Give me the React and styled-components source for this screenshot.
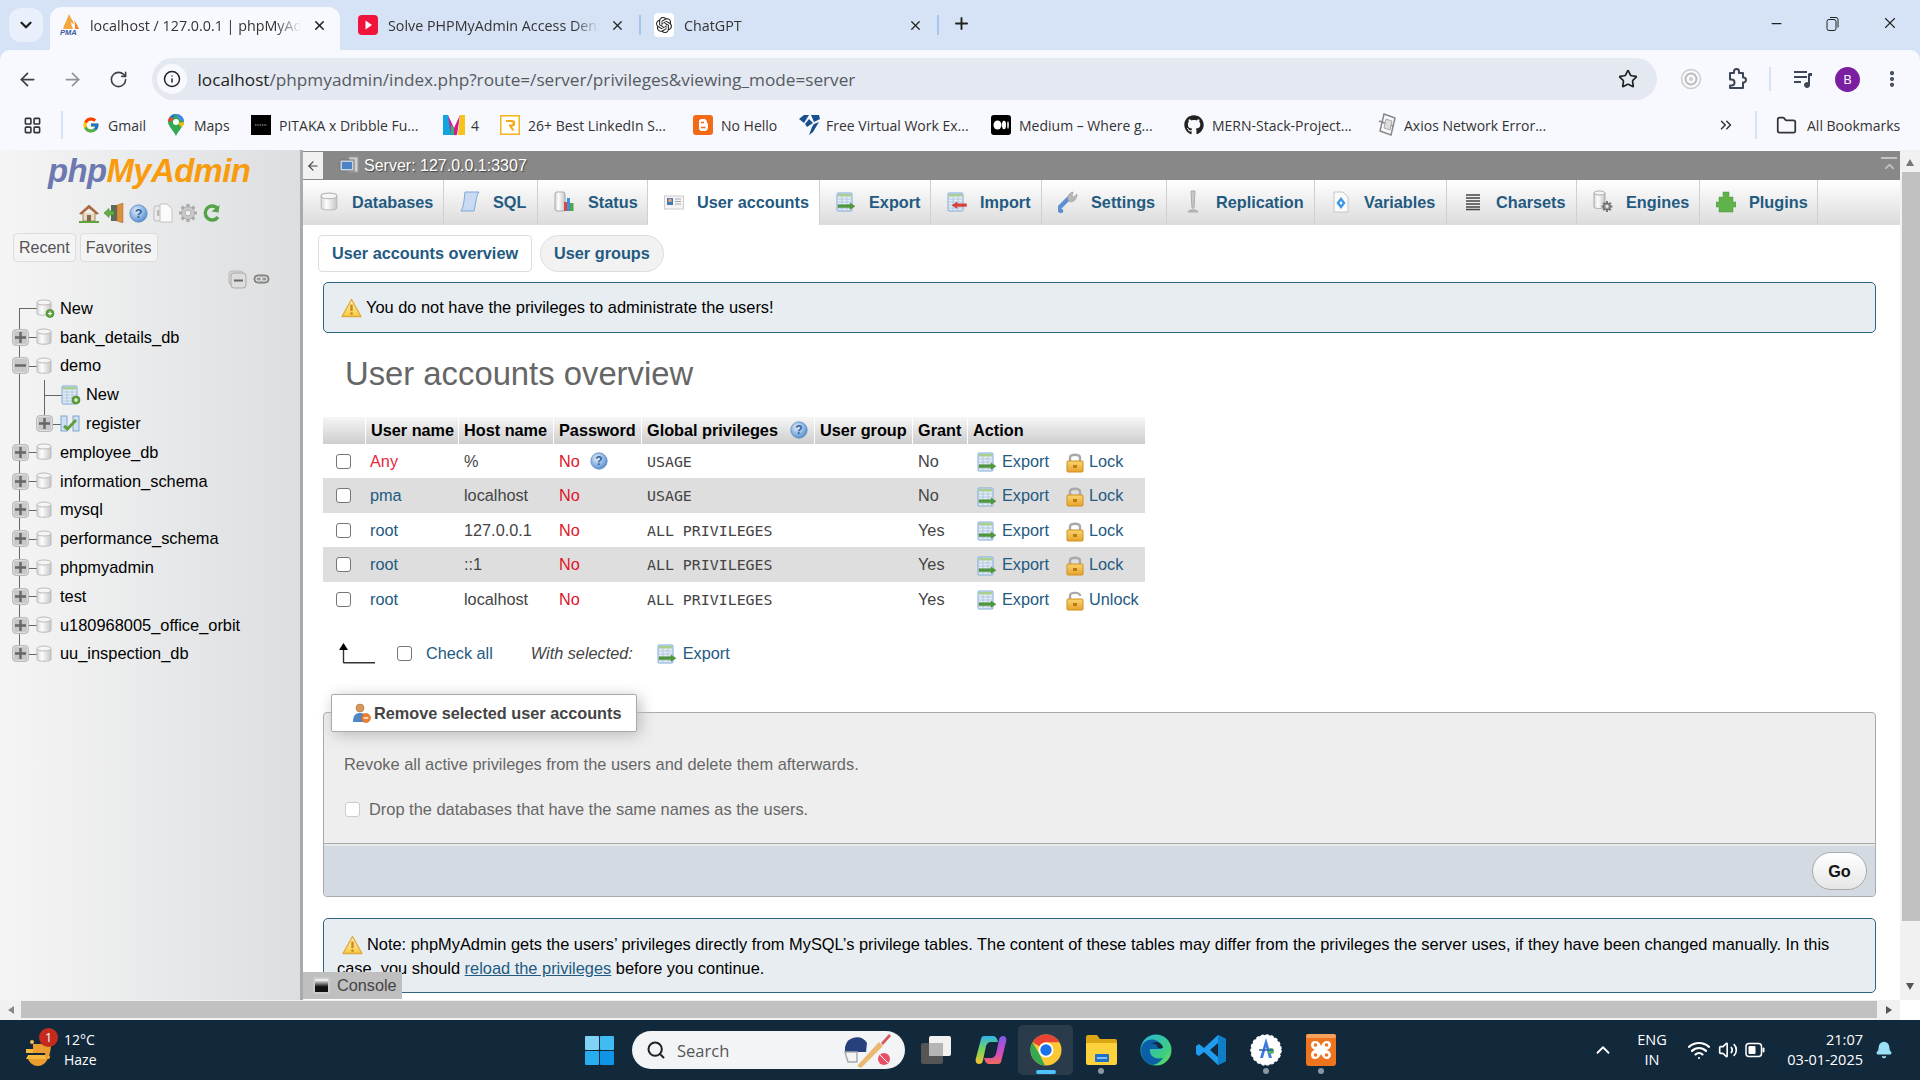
import styled, { createGlobalStyle } from 'styled-components'
import { ArrowLeft, ArrowRight, RotateCw, Star, Info, X, Plus, Minus, MoreVertical, ChevronDown, Folder, ChevronsRight, LayoutGrid, Search, ChevronUp, Wifi, Volume2, Bell } from 'lucide-react'
import { FaGithub } from 'react-icons/fa'
import { FcGoogle } from 'react-icons/fc'
import { SiOpenai } from 'react-icons/si'

const Global = createGlobalStyle`
    html, body { margin: 0; padding: 0; background: #fff; }
    * { box-sizing: border-box; }
    body { font-family: "Liberation Sans", Arial, sans-serif; font-size: 16.25px; color: #444; }
`

const Page = styled.div`
    width: 1920px;
    height: 1080px;
    overflow: hidden;
    display: flex;
    flex-direction: column;
    background: #d6e3f6;
`

/* browser chrome */
const TabStrip = styled.div`
    height: 50px;
    flex: none;
    display: flex;
    align-items: flex-end;
    padding-left: 9px;
    font-family: "Open Sans", sans-serif;
    font-size: 14.3px;
    color: #333;
`
const TabSearch = styled.div`
    width: 34px;
    height: 34px;
    margin-bottom: 8px;
    border-radius: 12px;
    background: #e9f0fb;
    display: flex;
    align-items: center;
    justify-content: center;
    color: #1f1f1f;
`
const BrowserTab = styled.div`
    position: relative;
    width: ${p => p.$w}px;
    height: 43px;
    margin-left: ${p => p.$ml || 0}px;
    padding: 0 0 7px ${p => p.$pl}px;
    display: flex;
    align-items: center;
    gap: 10px;
    background: ${p => p.$active ? '#f8f9fe' : 'transparent'};
    border-radius: 12px 12px 0 0;
    ${p => p.$sep && `
        &::after {
            content: '';
            position: absolute;
            right: 0;
            top: 8px;
            width: 2px;
            height: 20px;
            background: #a9c4ec;
        }
    `}
`
const TabTitle = styled.div`
    flex: 1;
    min-width: 0;
    white-space: nowrap;
    overflow: hidden;
    -webkit-mask-image: linear-gradient(90deg, #000 88%, transparent);
    mask-image: linear-gradient(90deg, #000 88%, transparent);
`
const TabClose = styled.div`
    width: 16px;
    margin-right: ${p => p.$mr}px;
    display: flex;
    align-items: center;
    justify-content: center;
    color: #222;
`
const NewTab = styled.div`
    margin: 0 0 17px 13px;
    color: #222;
    display: flex;
`
const WindowControls = styled.div`
    margin: 0 0 18px auto;
    display: flex;
    align-items: center;
    gap: 41px;
    padding-right: 21px;
    color: #222;
`
const Toolbar = styled.div`
    height: 50px;
    flex: none;
    background: #f8f9fe;
    border-radius: 10px 10px 0 0;
    display: flex;
    align-items: center;
    padding: 8px 0 0 15px;
    color: #444;
`
const NavButton = styled.div`
    width: 24px;
    margin-right: 21.5px;
    display: flex;
    justify-content: center;
    color: ${p => p.$dim ? '#8f949c' : '#3c4043'};
`
const Omnibox = styled.div`
    width: 1505px;
    height: 42px;
    border-radius: 21px;
    background: #e4e8f1;
    display: flex;
    align-items: center;
    padding: 0 19px 0 5px;
`
const InfoBubble = styled.div`
    width: 30px;
    height: 30px;
    border-radius: 50%;
    background: #f8f9fe;
    display: flex;
    align-items: center;
    justify-content: center;
    color: #222;
    margin-right: 11px;
`
const Url = styled.div`
    flex: 1;
    font-family: "Open Sans", sans-serif;
    font-size: 17.2px;
    color: #555b62;
    white-space: nowrap;
    b { font-weight: 400; color: #1f1f1f; }
`
const ToolSlot = styled.div`
    width: ${p => p.$w}px;
    display: flex;
    justify-content: center;
    color: #3c4654;
`
const ToolSep = styled.div`
    width: 2px;
    height: 24px;
    margin: 0 15.5px 0 20px;
    background: #d5e3f7;
`
const Avatar = styled.div`
    width: 25px;
    height: 25px;
    border-radius: 50%;
    background: #7b1fa2;
    color: #fff;
    font-family: "Open Sans", sans-serif;
    font-size: 13px;
    display: flex;
    align-items: center;
    justify-content: center;
`
const BookmarkBar = styled.div`
    height: 50px;
    flex: none;
    background: #f8f9fe;
    display: flex;
    align-items: center;
    padding: 0 0 0 23px;
    font-family: "Open Sans", sans-serif;
    font-size: 14px;
    color: #333;
`
const Bookmark = styled.div`
    width: ${p => p.$w}px;
    display: flex;
    align-items: center;
    gap: ${p => p.$gap || 8}px;
    white-space: nowrap;
`
const BarSep = styled.div`
    width: 2px;
    height: 28px;
    margin: 0 ${p => p.$mr}px 0 ${p => p.$ml}px;
    background: #d5e3f7;
`

/* phpMyAdmin page */
const Body = styled.div`
    flex: 1;
    display: flex;
    min-height: 0;
    background: #fff;
`
const Sidebar = styled.div`
    width: 303px;
    flex: none;
    border-right: 3px solid #aaa;
    background: linear-gradient(90deg, #f5f5f5, #dcdee0);
    display: flex;
    flex-direction: column;
    color: #000;
`
const Logo = styled.div`
    height: 44px;
    padding-left: 48px;
    font-size: 32.9px;
    font-weight: 700;
    font-style: italic;
    letter-spacing: -0.6px;
    line-height: 42px;
    color: #f89c0e;
    span { color: #6c78af; }
`
const NavIcons = styled.div`
    height: 30px;
    margin-top: 4px;
    padding-left: 79px;
    display: flex;
    align-items: center;
    gap: 5px;
`
const QuickTabs = styled.div`
    margin: 5px 0 0 13px;
    display: flex;
    gap: 4px;
`
const QuickTab = styled.div`
    height: 29px;
    padding: 0 5px;
    border: 1px solid #ddd;
    border-radius: 4px;
    background: #f4f4f4;
    color: #555;
    font-size: 16px;
    line-height: 27px;
`
const TreeTools = styled.div`
    height: 20px;
    margin-top: 7px;
    padding-left: 228px;
    display: flex;
    align-items: center;
    gap: 6px;
`
const Tree = styled.div`
    margin-top: 5px;
`
const TreeRow = styled.div`
    position: relative;
    height: 28.8px;
    display: flex;
    align-items: center;
    padding-left: ${p => p.$nested ? 86 : 60}px;
    font-size: 16.4px;
    &::before {
        content: '';
        position: absolute;
        left: 19px;
        top: ${p => p.$first ? '50%' : 0};
        bottom: ${p => p.$last ? '50%' : 0};
        width: 1px;
        background: #666;
    }
`
const TreeLink = styled.div`
    position: absolute;
    left: ${p => p.$x}px;
    top: 50%;
    width: ${p => p.$w}px;
    height: 1px;
    background: #666;
`
const SubLine = styled.div`
    position: absolute;
    left: 44px;
    top: 0;
    bottom: ${p => p.$half ? '50%' : 0};
    width: 1px;
    background: #666;
`
const Expander = styled.div`
    position: absolute;
    left: ${p => p.$x}px;
    top: 50%;
    margin-top: -8.5px;
    width: 17px;
    height: 17px;
    border-radius: 4px;
    background: #c8c8c8;
    border: 1px solid #bbb;
    box-shadow: inset 0 0 0 1px #ddd;
    display: flex;
    align-items: center;
    justify-content: center;
    color: #666;
    z-index: 1;
`
const TreeIcon = styled.div`
    position: absolute;
    left: ${p => p.$x}px;
    top: 50%;
    margin-top: -9px;
    height: 18px;
    display: flex;
    align-items: center;
    z-index: 1;
`
const Main = styled.div`
    position: relative;
    flex: 1;
    min-width: 0;
    overflow: hidden;
    display: flex;
    flex-direction: column;
`
const ServerBar = styled.div`
    height: 29px;
    flex: none;
    margin-top: 1px;
    background: #888;
    display: flex;
    align-items: center;
    color: #fff;
    font-size: 16px;
    text-shadow: 1px 1px 1px #444;
`
const BackBox = styled.div`
    width: 20px;
    height: 27px;
    background: #f1f1f1;
    color: #444;
    display: flex;
    align-items: center;
    justify-content: center;
    margin-right: 16px;
`
const ServerLabel = styled.div`
    flex: 1;
    margin-left: 5px;
`
const PinIcon = styled.div`
    width: 16px;
    margin-right: 3px;
    border-top: 2px solid #c4c4c4;
    display: flex;
    justify-content: center;
    color: #c4c4c4;
`
const Tabs = styled.div`
    height: 45px;
    flex: none;
    display: flex;
    background: linear-gradient(#fff, #dcdcdc);
    border-bottom: 1px solid #ddd;
`
const Tab = styled.div`
    width: ${p => p.$w}px;
    padding-left: 16px;
    display: flex;
    align-items: center;
    gap: 13px;
    font-weight: 700;
    color: #235a81;
    border-right: 1px solid #d0d0d0;
    white-space: nowrap;
    background: ${p => p.$active ? '#fff' : 'transparent'};
    height: ${p => p.$active ? '45px' : 'auto'};
    svg { flex: none; }
`
const Content = styled.div`
    flex: none;
    display: flex;
    flex-direction: column;
    margin: 0 24px 0 20px;
    & > * { flex: none; }
`
const SubTabs = styled.div`
    display: flex;
    gap: 8px;
    margin: 10px 0 0 -5px;
`
const SubTab = styled.div`
    height: 37px;
    padding: 0 13px;
    border: 1px solid #ddd;
    border-radius: ${p => p.$pill ? '19px' : '4px'};
    background: ${p => p.$pill ? '#f2f2f2' : '#fff'};
    color: #235a81;
    font-weight: 700;
    line-height: 35px;
`
const Notice = styled.div`
    margin-top: ${p => p.$mt}px;
    height: ${p => p.$h}px;
    border: 1px solid #2c6681;
    border-radius: 5px;
    background: #e8edf1;
    color: #000;
    padding: ${p => p.$pad};
    text-indent: ${p => p.$indent || 0}px;
    line-height: 24px;
    font-size: 16.4px;
    svg { vertical-align: -5px; margin-right: 4px; }
`
const Heading = styled.h2`
    margin: 21px 0 0 22px;
    height: 40px;
    font-size: 32.8px;
    font-weight: 400;
    line-height: 40px;
    color: #666;
`
const Table = styled.table`
    margin-top: 23px;
    width: 822px;
    table-layout: fixed;
    border-collapse: collapse;
    font-size: 16.25px;
    th {
        height: 27px;
        padding: 0 0 0 5.5px;
        text-align: left;
        color: #000;
        font-weight: 700;
        white-space: nowrap;
        background: linear-gradient(#f6f6f6, #cdcdcd);
        border-right: 1px solid #fff;
    }
    th svg { vertical-align: 1px; margin: -4px 0 -4px 12px; }
    th:last-child { border-right: 0; }
    td {
        padding: 0 0 0 6px;
        white-space: nowrap;
    }
    td:nth-child(2) { padding-left: 5px; }
    tbody tr { height: 34px; }
    tbody tr:nth-child(even) { height: 35px; background: #dedede; }
`
const Check = styled.input.attrs({ type: 'checkbox' })`
    appearance: none;
    width: 15px;
    height: 15px;
    margin: 0;
    flex: none;
    display: block;
    border: 1px solid ${p => p.$soft ? '#ccc' : '#767676'};
    border-radius: 3px;
    background: #fff;
`
const CheckCell = styled.div`
    display: flex;
    padding-left: 7px;
`
const Link = styled.a`
    color: #235a81;
    text-decoration: ${p => p.$under ? 'underline' : 'none'};
`
const Red = styled.span`
    color: ${p => p.$soft ? '#e8293c' : '#e0132a'};
    svg { vertical-align: 1px; margin: -4px 0 -4px 10px; }
`
const Mono = styled.span`
    font-family: "DejaVu Sans Mono", monospace;
    font-size: 14.9px;
    color: #444;
`
const ActionCell = styled.div`
    display: flex;
    align-items: center;
    padding-left: 4px;
`
const ActionLink = styled.a`
    width: ${p => p.$w}px;
    display: flex;
    align-items: center;
    gap: ${p => p.$gap}px;
    color: #235a81;
    svg { flex: none; margin-top: 2px; }
`
const SelectRow = styled.div`
    height: 40px;
    margin-top: 17px;
    padding-left: 16px;
    display: flex;
    align-items: center;
`
const Picked = styled.em`
    margin: 0 24px 0 38px;
    color: #444;
`
const CheckAll = styled.label`
    margin-left: 22px;
    display: flex;
    align-items: center;
    gap: 14px;
    color: #235a81;
`
const Fieldset = styled.div`
    margin-top: 39px;
    height: 185px;
    border: 1px solid #aaa;
    border-radius: 4px;
    background: #eee;
    display: flex;
    flex-direction: column;
`
const Legend = styled.div`
    width: 306px;
    height: 38px;
    margin: -19px 0 0 7px;
    border: 1px solid #aaa;
    border-radius: 2px;
    background: #fff;
    box-shadow: 3px 3px 15px #bbb;
    padding-left: 19px;
    display: flex;
    align-items: center;
    gap: 3px;
    font-weight: 700;
    color: #444;
`
const Revoke = styled.div`
    margin: 20px 0 0 20px;
    height: 24px;
    line-height: 24px;
    font-size: 16.4px;
    color: #666;
`
const DropRow = styled.div`
    margin: 21px 0 0 21px;
    height: 24px;
    display: flex;
    align-items: center;
    gap: 9px;
    font-size: 16.4px;
    color: #666;
`
const FieldFooter = styled.div`
    margin-top: auto;
    height: 53px;
    border-top: 1px solid #aaa;
    box-shadow: inset 0 2px 0 #e8e8e8;
    background: #d3dae2;
    display: flex;
    justify-content: flex-end;
    align-items: center;
    padding: 2px 8px 0 0;
    border-radius: 0 0 4px 4px;
`
const GoButton = styled.div`
    width: 55px;
    height: 38px;
    border: 1px solid #aaa;
    border-radius: 19px;
    background: linear-gradient(#fff, #e6e6e6);
    color: #111;
    font-weight: 700;
    text-align: center;
    line-height: 36px;
`
const Console = styled.div`
    position: absolute;
    left: 0;
    bottom: 1px;
    width: 99px;
    height: 27px;
    background: #bfbfbf;
    color: #444;
    display: flex;
    align-items: center;
    gap: 7px;
    padding-left: 10px;
`
const ConsoleGlyph = styled.div`
    width: 17px;
    height: 17px;
    border: 2px solid #ccc;
    border-radius: 2px;
    background: linear-gradient(#eee 10%, #111 60%);
`
const VScroll = styled.div`
    width: 20px;
    flex: none;
    background: #f1f1f1;
    display: flex;
    flex-direction: column;
    align-items: center;
    color: #777;
`
const VThumb = styled.div`
    width: 18px;
    margin: 6px 0 0 2px;
    height: 749px;
    background: #c1c1c1;
`
const ScrollArrow = styled.div`
    width: 0;
    height: 0;
    border-left: 4px solid transparent;
    border-right: 4px solid transparent;
    ${p => p.$up ? 'border-bottom: 7px solid #777;' : 'border-top: 7px solid #555;'}
    margin-top: ${p => p.$mt}px;
`
const HScroll = styled.div`
    height: 20px;
    flex: none;
    background: #fff;
    display: flex;
    align-items: center;
    padding-right: 20px;
`
const HTrack = styled.div`
    flex: 1;
    height: 20px;
    padding: 1px 0 2px 21px;
    background: #f1f1f1;
    display: flex;
    align-items: center;
    position: relative;
`
const HThumb = styled.div`
    width: 1856px;
    height: 100%;
    background: #c1c1c1;
`
const HArrow = styled.div`
    position: absolute;
    top: 6px;
    ${p => p.$left ? 'left: 8px;' : 'right: 8px;'}
    width: 0;
    height: 0;
    border-top: 4px solid transparent;
    border-bottom: 4px solid transparent;
    ${p => p.$left ? 'border-right: 6px solid #888;' : 'border-left: 6px solid #555;'}
`

/* windows taskbar */
const Taskbar = styled.div`
    height: 60px;
    flex: none;
    background: #12283b;
    display: flex;
    align-items: center;
    color: #fff;
    font-family: "Open Sans", sans-serif;
`
const Weather = styled.div`
    width: 585px;
    padding-left: 25px;
    display: flex;
    align-items: center;
    gap: 9px;
    font-size: 14px;
    line-height: 20px;
`
const WeatherGlyph = styled.div`
    position: relative;
    width: 30px;
    height: 36px;
`
const Badge = styled.div`
    position: absolute;
    left: 14px;
    top: -4px;
    width: 19px;
    height: 19px;
    border-radius: 50%;
    background: #c42b1c;
    color: #fff;
    font-size: 12.5px;
    line-height: 19px;
    text-align: center;
`
const SearchPill = styled.div`
    width: 273px;
    height: 38px;
    margin-left: 18px;
    border-radius: 19px;
    background: #f3f4f6;
    display: flex;
    align-items: center;
    padding: 0 12px 0 14px;
    gap: 11px;
    font-size: 16.5px;
    color: #555;
    span { flex: 1; }
`
const TaskSlot = styled.div`
    position: relative;
    width: 55px;
    height: 50px;
    margin-left: ${p => p.$ml || 0}px;
    display: flex;
    align-items: center;
    justify-content: center;
    border-radius: 5px;
    background: ${p => p.$active ? '#2a3c4c' : 'transparent'};
    ${p => p.$dot && `
        &::after {
            content: '';
            position: absolute;
            bottom: 1px;
            left: 50%;
            margin-left: ${p.$active ? -10 : -3}px;
            width: ${p.$active ? 20 : 6}px;
            height: ${p.$active ? 4 : 6}px;
            border-radius: 3px;
            background: ${p.$active ? '#4cc2ff' : '#8a97a3'};
        }
    `}
`
const Tray = styled.div`
    margin-left: auto;
    padding-right: 27px;
    display: flex;
    align-items: center;
    font-size: 14.5px;
`
const LangBlock = styled.div`
    width: 30px;
    margin: 0 20px 0 23px;
    line-height: 20px;
    text-align: center;
`
const TrayIcons = styled.div`
    display: flex;
    align-items: center;
    gap: 7px;
`
const Clock = styled.div`
    width: 77px;
    margin: 0 12px 0 21px;
    line-height: 20px;
    text-align: right;
    white-space: nowrap;
`

/* drawings */
const SharedDefs = () => (
    <svg width="0" height="0" style={{ position: 'absolute' }}>
        <defs>
            <linearGradient id="cyl" x1="0" x2="1" y1="0" y2="0">
                <stop offset="0" stopColor="#d6d6d6" />
                <stop offset=".35" stopColor="#fdfdfd" />
                <stop offset="1" stopColor="#c6c6c6" />
            </linearGradient>
            <linearGradient id="gold" x1="0" x2="0" y1="0" y2="1">
                <stop offset="0" stopColor="#f9d56e" />
                <stop offset="1" stopColor="#e7a32c" />
            </linearGradient>
            <radialGradient id="help" cx=".4" cy=".35" r=".7">
                <stop offset="0" stopColor="#e4eefa" />
                <stop offset=".6" stopColor="#8ab2e0" />
                <stop offset="1" stopColor="#4f86c6" />
            </radialGradient>
            <linearGradient id="warn" x1="0" x2="0" y1="0" y2="1">
                <stop offset="0" stopColor="#fff6c4" />
                <stop offset="1" stopColor="#f7c93e" />
            </linearGradient>
        </defs>
    </svg>
)
const DbIcon = ({ w = 16, h = 18 }) => (
    <svg width={w} height={h} viewBox="0 0 16 18">
        <path d="M1 3.5V14.5C1 16.8 15 16.8 15 14.5V3.5Z" fill="url(#cyl)" stroke="#bbb" />
        <ellipse cx="8" cy="3.5" rx="7" ry="2.5" fill="#f5f5f5" stroke="#bbb" />
    </svg>
)
const PlusDot = ({ x, y }) => (
    <>
        <circle cx={x} cy={y} r="4" fill="#5ea33a" stroke="#3d7a22" strokeWidth=".6" />
        <path d={`M${x - 2} ${y}h4M${x} ${y - 2}v4`} stroke="#fff" strokeWidth="1.2" />
    </>
)
const NewDbIcon = () => (
    <svg width="19" height="19" viewBox="0 0 19 19">
        <path d="M1 3.5V14.5C1 16.8 15 16.8 15 14.5V3.5Z" fill="url(#cyl)" stroke="#bbb" />
        <ellipse cx="8" cy="3.5" rx="7" ry="2.5" fill="#f5f5f5" stroke="#bbb" />
        <PlusDot x={14} y={14.5} />
    </svg>
)
const GridSheet = ({ arrow }) => (
    <>
        <rect x="1" y="1" width="15" height="18" rx="1" fill="#e3edf8" stroke="#7fa6d6" />
        <rect x="2" y="2" width="13" height="2.500" fill="#a8d08c" />
        <path d="M2 7h13M2 10h13M2 13h13M2 16h13M6 4.500v13.500M11 4.500v13.500" stroke="#b4c8de" />
        {arrow}
    </>
)
const ExportIcon = () => (
    <svg width="20" height="20" viewBox="0 0 20 20">
        <GridSheet arrow={<path d="M2 12.800h12V11l5 3.200-5 3.200v-1.800H2Z" fill="#4e9a3b" stroke="#3c7f2b" strokeWidth=".4" />} />
    </svg>
)
const ImportIcon = () => (
    <svg width="20" height="20" viewBox="0 0 20 20">
        <GridSheet arrow={<path d="M19.500 11.800H10V10l-5 3.200 5 3.200v-1.800h9.500Z" fill="#e0403a" stroke="#b92a25" strokeWidth=".4" />} />
    </svg>
)
const NewTableIcon = () => (
    <svg width="20" height="20" viewBox="0 0 20 20">
        <GridSheet />
        <PlusDot x={15} y={15} />
    </svg>
)
const TableIcon = () => (
    <svg width="20" height="19" viewBox="0 0 20 19">
        <rect x="1" y="2" width="6" height="15" fill="#cfe0f5" stroke="#7fa6d6" />
        <rect x="13" y="2" width="6" height="15" fill="#cfe0f5" stroke="#7fa6d6" />
        <path d="M4 12l3.5 3L16 6" fill="none" stroke="#5f9d3d" strokeWidth="3" />
    </svg>
)
const LockIcon = ({ open }) => (
    <svg width="18" height="21" viewBox="0 0 18 21">
        <path d={open ? 'M4 10V5.5C4 2 14 2 14 5.5V6' : 'M4 10V5.5C4 1.8 14 1.8 14 5.5V10'} fill="none" stroke="#a9a9a9" strokeWidth="2.4" />
        <rect x="1" y="9" width="16" height="11" rx="1" fill="url(#gold)" stroke="#d08f1e" />
        <rect x="7" y="13" width="4" height="3" fill="#b97d14" />
    </svg>
)
const HelpIcon = ({ s = 18 }) => (
    <svg width={s} height={s} viewBox="0 0 18 18">
        <circle cx="9" cy="9" r="8.2" fill="url(#help)" stroke="#5f8fc8" strokeWidth=".8" />
        <text x="9" y="13.2" textAnchor="middle" fontSize="12" fontWeight="700" fontFamily="Liberation Sans" fill="#2d5f9e">?</text>
    </svg>
)
const WarnIcon = () => (
    <svg width="21" height="20" viewBox="0 0 21 20">
        <path d="M10.5 1.5L20 18.5H1Z" fill="url(#warn)" stroke="#e0a93c" strokeWidth="1.3" strokeLinejoin="round" />
        <path d="M10.5 6.5v6.5" stroke="#c98a1e" strokeWidth="2.4" />
        <circle cx="10.5" cy="15.6" r="1.3" fill="#c98a1e" />
    </svg>
)
const HomeIcon = () => (
    <svg width="20" height="20" viewBox="0 0 20 20">
        <path d="M4 10v8h12v-8" fill="#ead9c0" stroke="#a98a5e" />
        <path d="M0.5 10.5L10 2l9.5 8.5-2 .7L10 5 2.5 11.2Z" fill="#b2693a" stroke="#874a22" strokeWidth=".5" />
        <rect x="8" y="12" width="4" height="6" fill="#7c6a54" />
        <path d="M0 19h20" stroke="#5fa33c" strokeWidth="2" />
    </svg>
)
const DoorIcon = () => (
    <svg width="20" height="20" viewBox="0 0 20 20">
        <rect x="7" y="2" width="6" height="16" fill="#5c6a5a" />
        <path d="M13 2l6-2v20l-6-2Z" fill="#d9913f" stroke="#a96a22" strokeWidth=".5" />
        <path d="M0 10l5-4.5V8h5v4H5v2.5Z" fill="#63ae47" stroke="#3e8426" strokeWidth=".6" />
    </svg>
)
const DocsIcon = () => (
    <svg width="20" height="20" viewBox="0 0 20 20">
        <rect x="1" y="3" width="11" height="15" rx="2" fill="#eaeaea" stroke="#bbb" />
        <path d="M7 1h7l5 5v13H7Z" fill="#fbfbfb" stroke="#c4c4c4" />
        <rect x="4" y="7" width="2.5" height="6" fill="#bbb" />
    </svg>
)
const GearIcon = () => (
    <svg width="20" height="20" viewBox="0 0 20 20">
        <path d="M10 1v18M1 10h18M3.6 3.6l12.8 12.8M16.4 3.6L3.6 16.4" stroke="#aaa" strokeWidth="3.2" />
        <circle cx="10" cy="10" r="6.5" fill="#c9c9c9" stroke="#999" strokeWidth=".6" />
        <circle cx="10" cy="10" r="2.8" fill="#f2f2f2" stroke="#999" strokeWidth=".6" />
    </svg>
)
const ReloadIcon = () => (
    <svg width="17" height="20" viewBox="0 0 17 20">
        <path d="M15 6A7 7 0 1 0 15 14" fill="none" stroke="#55a348" strokeWidth="3.4" />
        <path d="M16 1.5V9H9Z" fill="#55a348" transform="rotate(8 12 6)" />
    </svg>
)
const CollapseIcon = () => (
    <svg width="19" height="19" viewBox="0 0 19 19">
        <rect x="1" y="1" width="14" height="14" rx="3" fill="#d5d5d5" stroke="#bbb" />
        <rect x="3" y="3" width="15" height="15" rx="3" fill="#ddd" stroke="#aaa" />
        <path d="M6 10.5h9" stroke="#666" strokeWidth="2" />
    </svg>
)
const ChainIcon = () => (
    <svg width="17" height="10" viewBox="0 0 17 10">
        <rect x="1" y="1" width="15" height="8" rx="4" fill="#999" stroke="#777" />
        <rect x="3" y="3" width="6" height="4" rx="2" fill="none" stroke="#eee" />
        <rect x="8" y="3" width="6" height="4" rx="2" fill="none" stroke="#eee" />
    </svg>
)
const ServerIcon = () => (
    <svg width="20" height="20" viewBox="0 0 20 20">
        <rect x="10" y="1" width="9" height="15" fill="#cfcfcf" stroke="#999" />
        <rect x="1" y="4" width="14" height="11" fill="#c9d3e0" stroke="#777" />
        <rect x="3" y="6" width="10" height="7" fill="#4b83c4" />
        <path d="M5 18h8M9 15v3" stroke="#888" strokeWidth="2" />
    </svg>
)
const SqlIcon = () => (
    <svg width="20" height="22" viewBox="0 0 20 22">
        <path d="M5 1h14c-2 3-2 4-3 9l-2 10H1c2-3 2-5 3-10Z" fill="#c8dbf2" stroke="#7fa6d6" />
    </svg>
)
const StatusIcon = () => (
    <svg width="21" height="22" viewBox="0 0 21 22">
        <rect x="1" y="1" width="10" height="19" rx="2" fill="url(#cyl)" stroke="#aaa" />
        <rect x="10" y="11" width="3" height="9" fill="#d94a3d" />
        <rect x="13" y="7" width="3" height="13" fill="#3f8fd9" />
        <rect x="16" y="12" width="3.5" height="8" fill="#55a348" />
    </svg>
)
const UsersIcon = () => (
    <svg width="20" height="16" viewBox="0 0 20 16">
        <rect x=".5" y="1" width="19" height="13" fill="#f4f4f4" stroke="#ccc" />
        <rect x="3" y="3" width="6" height="7" fill="#3f79b8" />
        <circle cx="6" cy="5.4" r="1.8" fill="#e2a56f" />
        <path d="M11 4h6M11 6.5h6M11 9h6" stroke="#aaa" />
    </svg>
)
const WrenchIcon = () => (
    <svg width="20" height="22" viewBox="0 0 20 22">
        <path d="M3 20c-2-1-2-3-1-4l8-8" fill="none" stroke="#5f8fd0" strokeWidth="4.5" strokeLinecap="round" />
        <path d="M10 9c-1-4 1-7 5-8l-1 4 2 1 3-3c0 5-3 8-7 8Z" fill="#b8b8b8" stroke="#888" strokeWidth=".5" />
    </svg>
)
const ReplicationIcon = () => (
    <svg width="20" height="24" viewBox="0 0 20 24">
        <path d="M8 1h4l-1 17H9Z" fill="#c8c8c8" stroke="#aaa" />
        <path d="M5 22c1-3 9-3 10 0Z" fill="#bbb" stroke="#aaa" />
    </svg>
)
const VariablesIcon = () => (
    <svg width="20" height="22" viewBox="0 0 20 22">
        <path d="M3 1h9l5 5v15H3Z" fill="#fbfbfb" stroke="#c6c6c6" />
        <path d="M7 12l3-4 3 4-3 4Z" fill="#fff" stroke="#3b97e6" strokeWidth="2.4" />
    </svg>
)
const CharsetsIcon = () => (
    <svg width="20" height="18" viewBox="0 0 20 18">
        <path d="M3 2h14M3 5h14M3 8h14M3 11h14M3 14h14M3 16.5h14" stroke="#444" strokeWidth="1.6" />
    </svg>
)
const EnginesIcon = () => (
    <svg width="20" height="24" viewBox="0 0 20 24">
        <path d="M1 3V17C1 19 12 19 12 17V3Z" fill="url(#cyl)" stroke="#aaa" />
        <ellipse cx="6.5" cy="3" rx="5.5" ry="2" fill="#f5f5f5" stroke="#aaa" />
        <path d="M14 11v11M8.5 16.5h11M10.2 12.7l7.6 7.6M17.8 12.7l-7.6 7.6" stroke="#777" strokeWidth="2" />
        <circle cx="14" cy="16.5" r="3.4" fill="#999" stroke="#666" />
        <circle cx="14" cy="16.5" r="1.4" fill="#eee" />
    </svg>
)
const PluginIcon = () => (
    <svg width="20" height="22" viewBox="0 0 20 22">
        <path d="M7 1h6v4l-1 1h5v5h3v5h-3v5H3v-5H0v-5h3V6h5L7 5Z" fill="#5fb34a" stroke="#4a9a38" strokeWidth=".5" />
    </svg>
)
const RemoveUserIcon = () => (
    <svg width="20" height="20" viewBox="0 0 20 20">
        <circle cx="9" cy="5" r="4" fill="#d9975a" stroke="#9a6330" strokeWidth=".5" />
        <path d="M2 19c0-7 3-9 7-9s7 2 7 9Z" fill="#4f86c6" />
        <circle cx="15" cy="15" r="4.5" fill="#ef7d2c" stroke="#c85c13" strokeWidth=".5" />
        <path d="M12.7 15h4.6" stroke="#fff" strokeWidth="1.4" />
    </svg>
)
const TurnArrow = () => (
    <svg width="36" height="21" viewBox="0 0 36 21">
        <path d="M4.5 20V5M4.5 19.7H36" stroke="#333" strokeWidth="1.4" fill="none" />
        <path d="M0 7L4.5 0 9 7Z" fill="#000" />
    </svg>
)
const PmaFavicon = () => (
    <svg width="20" height="22" viewBox="0 0 20 22">
        <path d="M9 0c1 3 4 6 5 10-1 0-2-1-3-2 0 2 1 5 2 7H3c1-4 4-9 6-15Z" fill="#f6a63c" />
        <path d="M14 6c2 3 4 6 5 9h-4c0-3 0-6-1-9Z" fill="#f0862a" />
        <text x="0" y="21" fontSize="7.5" fontStyle="italic" fontWeight="700" fontFamily="Liberation Sans" fill="#3b5b9c">PMA</text>
    </svg>
)
const YoutubeIcon = () => (
    <svg width="20" height="20" viewBox="0 0 20 20">
        <rect width="20" height="20" rx="4" fill="#f0133c" />
        <path d="M7.5 5.5l6.5 4.5-6.500 4.500Z" fill="#fff" />
    </svg>
)
const GptFavicon = () => (
    <svg width="20" height="24" viewBox="0 0 20 24">
        <rect width="20" height="24" rx="4" fill="#fff" />
        <foreignObject x="2" y="4" width="16" height="16"><SiOpenai size={16} color="#222" /></foreignObject>
    </svg>
)
const MapsPin = () => (
    <svg width="16" height="22" viewBox="0 0 16 22">
        <path d="M8 0a8 8 0 0 1 8 8c0 4-5 8-8 14C5 16 0 12 0 8a8 8 0 0 1 8-8Z" fill="#34a853" />
        <path d="M2 2.5A8 8 0 0 1 8 0L5 4Z" fill="#1a73e8" />
        <path d="M8 0a8 8 0 0 1 8 8l-5-3Z" fill="#4285f4" />
        <path d="M0 8A8 8 0 0 1 2 2.6L6 6Z" fill="#ea4335" />
        <path d="M16 8c0 2-1 3.5-2.5 5.5L10 9Z" fill="#fbbc04" />
        <circle cx="8" cy="8" r="3" fill="#fff" />
    </svg>
)
const PitakaIcon = () => (
    <svg width="20" height="20" viewBox="0 0 20 20">
        <rect width="20" height="20" fill="#000" />
        <path d="M4 10h12" stroke="#aaa" strokeWidth="1.2" strokeDasharray="1.5 .8" />
    </svg>
)
const MBrand = () => (
    <svg width="22" height="20" viewBox="0 0 22 20">
        <path d="M0 20V0h5l3 10v10Z" fill="#12a3e0" />
        <path d="M5 0l6 13 6-13-3 20H8Z" fill="#d41c8f" />
        <path d="M17 0h5v20h-7Z" fill="#f7c21a" />
        <path d="M8 10l3 3 0 7H8Z" fill="#2ab673" />
    </svg>
)
const RBrand = () => (
    <svg width="20" height="20" viewBox="0 0 20 20">
        <rect x=".75" y=".75" width="18.5" height="18.5" fill="#fff" stroke="#f4b41a" strokeWidth="1.5" />
        <path d="M6 5h6a3.2 3.2 0 0 1 0 6.500l2.500 4H12l-2.500-4H9v-2h2.500a1.200 1.200 0 0 0 0-2.400H6Z" fill="#f4a91a" />
    </svg>
)
const BloggerIcon = () => (
    <svg width="20" height="20" viewBox="0 0 20 20">
        <rect width="20" height="20" rx="3" fill="#f26a16" />
        <path d="M6 9V6.500C6 5 7 4 8.500 4H11c1.500 0 3 1 3 3v.5c0 .8.500 1 1 1v4c0 2-1.500 3.500-3 3.500H8.500C7 16 6 14.500 6 13Z" fill="#fff" />
        <path d="M8 7.500h3M8 12.500h4.500" stroke="#f26a16" strokeWidth="1.500" />
    </svg>
)
const VirtualIcon = () => (
    <svg width="21" height="20" viewBox="0 0 21 20">
        <path d="M0 4l5-4h5L5 8ZM12 0h8l1 4-6 3ZM6 9l4-5 4 4-6 4ZM15 9l5-2-6 10-4 3 3-8Z" fill="#17508f" />
    </svg>
)
const MediumIcon = () => (
    <svg width="20" height="20" viewBox="0 0 20 20">
        <rect width="20" height="20" rx="3" fill="#000" />
        <ellipse cx="6.500" cy="10" rx="4" ry="4.500" fill="#fff" />
        <ellipse cx="13" cy="10" rx="2" ry="4.200" fill="#fff" />
        <ellipse cx="17" cy="10" rx=".8" ry="3.800" fill="#fff" />
    </svg>
)
const AxiosIcon = () => (
    <svg width="22" height="24" viewBox="0 0 22 24">
        <path d="M8 1l11 4-4 17-11-4Z M8 1L4 18 M19 5L15 22 M3 8l14 5" fill="none" stroke="#888" strokeWidth="1.500" />
        <path d="M10 6l6 2-2 9-6-2Z" fill="#ddd" stroke="#aaa" />
    </svg>
)
const GhostExt = () => (
    <svg width="22" height="24" viewBox="0 0 22 24">
        <circle cx="11" cy="12" r="9.500" fill="none" stroke="#ccc" strokeWidth="1.500" />
        <circle cx="11" cy="12" r="5.500" fill="none" stroke="#bbb" strokeWidth="2" />
        <circle cx="11" cy="12" r="2" fill="#ccc" />
    </svg>
)
const PuzzleGlyph = () => (
    <svg width="24" height="24" viewBox="0 0 24 24">
        <path d="M5 6h4V4.500a2.500 2.500 0 0 1 5 0V6h4v4.500h.5a2.500 2.500 0 0 1 0 5H18V21H5v-2.500h1.500a3 3 0 0 0 0-6H5Z" fill="none" stroke="#3c4654" strokeWidth="2" strokeLinejoin="round" />
    </svg>
)
const MediaIcon = () => (
    <svg width="20" height="20" viewBox="0 0 20 20">
        <path d="M1 3h13M1 8h13M1 13h7" stroke="#3c4654" strokeWidth="2" />
        <path d="M16 4h3v3h-2v9a3 3 0 1 1-2-2.800V5" fill="#3c4654" />
    </svg>
)
const WinLogo = () => (
    <svg width="29" height="29" viewBox="0 0 29 29">
        <rect width="14" height="14" rx="1" fill="#7fd4f5" />
        <rect x="15" width="14" height="14" rx="1" fill="#3fbdf2" />
        <rect y="15" width="14" height="14" rx="1" fill="#28aef0" />
        <rect x="15" y="15" width="14" height="14" rx="1" fill="#0f94e6" />
    </svg>
)
const WeatherIcon = () => (
    <svg width="30" height="36" viewBox="0 0 30 36">
        <circle cx="7" cy="10" r="2" fill="#f1c14d" />
        <path d="M1 17h18a2 2 0 0 1 0 4H1Z M3 23h20a2 2 0 0 1 0 4H1Z" fill="#f6b93b" />
        <path d="M8 12h18c0 10-4 22-13 22-5 0-8-3-10-7h18l-1-6H8Z" fill="#eb9d2f" />
    </svg>
)
const CricketDoodle = () => (
    <svg width="50" height="36" viewBox="0 0 50 36">
        <path d="M2 15a12 12 0 0 1 22-4l-1 9H2Z" fill="#27407e" />
        <path d="M2 20h12v10H5Z" fill="none" stroke="#aaa" strokeWidth="1.500" />
        <path d="M14 34l22-24 4 4-22 22Z" fill="#e9b871" />
        <path d="M38 11l8-9 2 2-8 9Z" fill="#d8555f" />
        <circle cx="41" cy="27" r="6" fill="#e84f66" />
        <path d="M37 23l8 8" stroke="#fff" />
    </svg>
)
const TaskViewIcon = () => (
    <svg width="30" height="28" viewBox="0 0 30 28">
        <rect x="0" y="7" width="22" height="21" rx="2" fill="#555" />
        <rect x="8" y="0" width="22" height="20" rx="2" fill="#f1f1f1" />
        <rect x="8" y="7" width="14" height="13" fill="#b5b5b5" />
    </svg>
)
const CopilotIcon = () => (
    <svg width="32" height="32" viewBox="0 0 32 32">
        <defs>
            <linearGradient id="cop1" x1="0" y1="0" x2="0" y2="1"><stop offset="0" stopColor="#2fb5ea" /><stop offset=".5" stopColor="#7bd35a" /><stop offset="1" stopColor="#f8c22e" /></linearGradient>
            <linearGradient id="cop2" x1="0" y1="0" x2="0" y2="1"><stop offset="0" stopColor="#7a5ce8" /><stop offset=".6" stopColor="#d24ac2" /><stop offset="1" stopColor="#f16a5a" /></linearGradient>
        </defs>
        <path d="M9 2h9c2 0 3 1 4 3l1 3h-7c-3 0-4 2-5 4l-3 14c-.5 3-2 4-4 4-3 0-4-3-3-6L6 5c.5-2 1.500-3 3-3Z" fill="url(#cop1)" />
        <path d="M23 30h-9c-2 0-3-1-4-3l-1-3h7c3 0 4-2 5-4l3-14c.5-3 2-4 4-4 3 0 4 3 3 6l-5 20c-.5 1-1.500 2-3 2Z" fill="url(#cop2)" />
    </svg>
)
const ChromeIcon = () => (
    <svg width="32" height="32" viewBox="0 0 32 32">
        <circle cx="16" cy="16" r="15.500" fill="#fcc934" />
        <path d="M16 .5A15.500 15.500 0 0 1 29.400 8.250H16a7.750 7.750 0 0 0-6.700 3.900L2.600 8.250A15.500 15.500 0 0 1 16 .5Z" fill="#ea4335" />
        <path d="M2.600 8.250L9.300 19.900 15 31.500A15.500 15.500 0 0 1 2.600 8.250Z" fill="#34a853" />
        <circle cx="16" cy="16" r="7.500" fill="#fff" />
        <circle cx="16" cy="16" r="5.700" fill="#1a73e8" />
    </svg>
)
const FilesIcon = () => (
    <svg width="32" height="30" viewBox="0 0 32 30">
        <path d="M1 2a2 2 0 0 1 2-2h9l3 4h15a2 2 0 0 1 2 2v4H1Z" fill="#dba514" />
        <path d="M1 8h31v20a2 2 0 0 1-2 2H3a2 2 0 0 1-2-2Z" fill="#fdd23d" />
        <rect x="10" y="19" width="14" height="8" rx="1" fill="#1e70c9" />
        <rect x="12" y="22" width="10" height="2" fill="#7ec0f5" />
    </svg>
)
const EdgeIcon = () => (
    <svg width="32" height="32" viewBox="0 0 32 32">
        <defs>
            <linearGradient id="edg" x1="0" y1="0" x2="1" y2="1"><stop offset="0" stopColor="#29b6d8" /><stop offset=".7" stopColor="#3dce7f" /><stop offset="1" stopColor="#7fe05a" /></linearGradient>
        </defs>
        <circle cx="16" cy="16" r="15.500" fill="url(#edg)" />
        <path d="M1 16C1 9 8 4 15 6c6 2 7 6 7 9H10c-1 6 4 11 13 9-3 4-7 7-11 7C6 30 1 24 1 16Z" fill="#0c5fa6" />
        <path d="M23 14c0-5-7-8-12-4 5-1 7 2 7 4Z" fill="#12283b" />
    </svg>
)
const VsCodeIcon = () => (
    <svg width="32" height="32" viewBox="0 0 32 32">
        <path d="M23 1l8 4v22l-8 4-14-13-5 4-3-2V12l3-2 5 4Zm0 8l-8 7 8 7Z" fill="#1f9cf0" fillRule="evenodd" />
        <path d="M23 1l8 4v22l-8 4Z" fill="#0f7ec9" />
    </svg>
)
const AndroidStudioIcon = () => (
    <svg width="32" height="32" viewBox="0 0 32 32">
        <circle cx="16" cy="16" r="15" fill="#fff" stroke="#fff" strokeWidth="1.500" strokeDasharray="3 2" />
        <path d="M16 4l-6 20h3l3-11 3 11h3Z" fill="#3c7ce0" />
        <circle cx="21" cy="17" r="3" fill="#57b35c" />
        <path d="M9 16h14" stroke="#2d5fb3" strokeWidth="1.500" />
    </svg>
)
const XamppIcon = () => (
    <svg width="30" height="32" viewBox="0 0 30 32">
        <rect width="30" height="32" rx="3" fill="#ee7420" />
        <rect x="0" y="0" width="30" height="4" rx="2" fill="#f6a05e" />
        <path d="M9 7c-3 0-4 2-4 4s2 5 5 5c-3 0-5 2-5 5s2 4 4 4 5-2 6-5c1 3 4 5 6 5s4-2 4-4-2-5-5-5c3 0 5-3 5-5s-1-4-4-4-5 2-6 5c-1-3-3-5-6-5Z" fill="#fff" />
        <circle cx="9.500" cy="11" r="1.800" fill="#ee7420" />
        <circle cx="20.500" cy="11" r="1.800" fill="#ee7420" />
        <circle cx="9.500" cy="21" r="1.800" fill="#ee7420" />
        <circle cx="20.500" cy="21" r="1.800" fill="#ee7420" />
    </svg>
)
const BatteryGlyph = () => (
    <svg width="20" height="16" viewBox="0 0 20 16">
        <rect x="1" y="1.500" width="15.500" height="13" rx="3" fill="none" stroke="#fff" strokeWidth="1.500" />
        <rect x="3.500" y="4" width="7" height="8" rx="1" fill="#fff" />
        <rect x="17.500" y="5.500" width="2" height="5" rx="1" fill="#fff" />
    </svg>
)
const TreeSign = ({ minus }) => (
    <svg width="11" height="11" viewBox="0 0 11 11">
        <path d={minus ? 'M0 5.500h11' : 'M0 5.500h11M5.500 0v11'} stroke="#666" strokeWidth="2.400" />
    </svg>
)

const databases = ['employee_db', 'information_schema', 'mysql', 'performance_schema', 'phpmyadmin', 'test', 'u180968005_office_orbit', 'uu_inspection_db']

const tabs = [
    ['Databases', <DbIcon w={20} h={20} />, 141],
    ['SQL', <SqlIcon />, 94],
    ['Status', <StatusIcon />, 110],
    ['User accounts', <UsersIcon />, 172, true],
    ['Export', <ExportIcon />, 111],
    ['Import', <ImportIcon />, 111],
    ['Settings', <WrenchIcon />, 125],
    ['Replication', <ReplicationIcon />, 148],
    ['Variables', <VariablesIcon />, 132],
    ['Charsets', <CharsetsIcon />, 130],
    ['Engines', <EnginesIcon />, 123],
    ['Plugins', <PluginIcon />, 118],
]

const users = [
    { name: 'Any', any: true, host: '%', help: true, priv: 'USAGE', grant: 'No', lock: 'Lock' },
    { name: 'pma', host: 'localhost', priv: 'USAGE', grant: 'No', lock: 'Lock' },
    { name: 'root', host: '127.0.0.1', priv: 'ALL PRIVILEGES', grant: 'Yes', lock: 'Lock' },
    { name: 'root', host: '::1', priv: 'ALL PRIVILEGES', grant: 'Yes', lock: 'Lock' },
    { name: 'root', host: 'localhost', priv: 'ALL PRIVILEGES', grant: 'Yes', lock: 'Unlock' },
]

const App = () => {
    return (
        <Page>
            <Global />
            <SharedDefs />
            <TabStrip>
                <TabSearch><ChevronDown size={18} strokeWidth={3} /></TabSearch>
                <BrowserTab $active $w={290} $ml={7} $pl={10}>
                    <PmaFavicon />
                    <TabTitle>localhost / 127.0.0.1 | phpMyAdmin 5.2.1</TabTitle>
                    <TabClose $mr={13}><X size={15} strokeWidth={2.5} /></TabClose>
                </BrowserTab>
                <BrowserTab $w={301} $pl={18} $sep>
                    <YoutubeIcon />
                    <TabTitle>Solve PHPMyAdmin Access Denied</TabTitle>
                    <TabClose $mr={16}><X size={15} /></TabClose>
                </BrowserTab>
                <BrowserTab $w={298} $pl={13} $sep>
                    <GptFavicon />
                    <TabTitle>ChatGPT</TabTitle>
                    <TabClose $mr={16}><X size={15} /></TabClose>
                </BrowserTab>
                <NewTab><Plus size={19} strokeWidth={2.4} /></NewTab>
                <WindowControls>
                    <Minus size={15} />
                    <svg width="15" height="15" viewBox="0 0 15 15"><rect x="2" y="3.500" width="9" height="11" rx="2" fill="none" stroke="#222" /><path d="M5 1.500h6a2 2 0 0 1 2 2v8" fill="none" stroke="#222" /></svg>
                    <X size={18} strokeWidth={1.5} />
                </WindowControls>
            </TabStrip>

            <Toolbar>
                <NavButton><ArrowLeft size={21} /></NavButton>
                <NavButton $dim><ArrowRight size={21} /></NavButton>
                <NavButton><RotateCw size={19} /></NavButton>
                <Omnibox>
                    <InfoBubble><Info size={18} /></InfoBubble>
                    <Url><b>localhost</b>/phpmyadmin/index.php?route=/server/privileges&amp;viewing_mode=server</Url>
                    <Star size={20} color="#222" />
                </Omnibox>
                <ToolSlot $w={68}><GhostExt /></ToolSlot>
                <ToolSlot $w={24}><PuzzleGlyph /></ToolSlot>
                <ToolSep />
                <ToolSlot $w={33}><MediaIcon /></ToolSlot>
                <ToolSlot $w={57}><Avatar>B</Avatar></ToolSlot>
                <ToolSlot $w={31}><MoreVertical size={20} strokeWidth={3} /></ToolSlot>
            </Toolbar>

            <BookmarkBar>
                <Bookmark $w={38}><LayoutGrid size={19} /></Bookmark>
                <BarSep $ml={0} $mr={19} />
                <Bookmark $w={86}><FcGoogle size={18} />Gmail</Bookmark>
                <Bookmark $w={83} $gap={10}><MapsPin />Maps</Bookmark>
                <Bookmark $w={192}><PitakaIcon />PITAKA x Dribble Fu...</Bookmark>
                <Bookmark $w={57} $gap={6}><MBrand />4</Bookmark>
                <Bookmark $w={193}><RBrand />26+ Best LinkedIn S...</Bookmark>
                <Bookmark $w={106}><BloggerIcon />No Hello</Bookmark>
                <Bookmark $w={192} $gap={6}><VirtualIcon />Free Virtual Work Ex...</Bookmark>
                <Bookmark $w={193}><MediumIcon />Medium – Where g...</Bookmark>
                <Bookmark $w={192}><FaGithub size={20} color="#222" />MERN-Stack-Project...</Bookmark>
                <Bookmark $w={341} $gap={6}><AxiosIcon />Axios Network Error...</Bookmark>
                <ChevronsRight size={18} />
                <BarSep $ml={20} $mr={19} />
                <Bookmark $w={125} $gap={10}><Folder size={21} />All Bookmarks</Bookmark>
            </BookmarkBar>

            <Body>
                <Sidebar>
                    <Logo><span>php</span>MyAdmin</Logo>
                    <NavIcons>
                        <HomeIcon /><DoorIcon /><HelpIcon s={19} /><DocsIcon /><GearIcon /><ReloadIcon />
                    </NavIcons>
                    <QuickTabs>
                        <QuickTab>Recent</QuickTab>
                        <QuickTab>Favorites</QuickTab>
                    </QuickTabs>
                    <TreeTools><CollapseIcon /><ChainIcon /></TreeTools>
                    <Tree>
                        <TreeRow $first>
                            <TreeLink $x={19} $w={18} />
                            <TreeIcon $x={36}><NewDbIcon /></TreeIcon>
                            New
                        </TreeRow>
                        <TreeRow>
                            <Expander $x={12}><TreeSign /></Expander>
                            <TreeLink $x={28} $w={9} />
                            <TreeIcon $x={36}><DbIcon /></TreeIcon>
                            bank_details_db
                        </TreeRow>
                        <TreeRow>
                            <Expander $x={12}><TreeSign minus /></Expander>
                            <TreeLink $x={28} $w={9} />
                            <TreeIcon $x={36}><DbIcon /></TreeIcon>
                            demo
                        </TreeRow>
                        <TreeRow $nested>
                            <SubLine />
                            <TreeLink $x={44} $w={18} />
                            <TreeIcon $x={61}><NewTableIcon /></TreeIcon>
                            New
                        </TreeRow>
                        <TreeRow $nested>
                            <SubLine $half />
                            <Expander $x={36}><TreeSign /></Expander>
                            <TreeLink $x={53} $w={8} />
                            <TreeIcon $x={60}><TableIcon /></TreeIcon>
                            register
                        </TreeRow>
                        {databases.map((db, i) => (
                            <TreeRow key={db} $last={i === databases.length - 1}>
                                <Expander $x={12}><TreeSign /></Expander>
                                <TreeLink $x={28} $w={9} />
                                <TreeIcon $x={36}><DbIcon /></TreeIcon>
                                {db}
                            </TreeRow>
                        ))}
                    </Tree>
                </Sidebar>

                <Main>
                    <ServerBar>
                        <BackBox><ArrowLeft size={14} /></BackBox>
                        <ServerIcon />
                        <ServerLabel>Server: 127.0.0.1:3307</ServerLabel>
                        <PinIcon><ChevronUp size={15} strokeWidth={2.5} /></PinIcon>
                    </ServerBar>
                    <Tabs>
                        {tabs.map(([label, icon, w, active]) => (
                            <Tab key={label} $w={w} $active={active}>{icon}{label}</Tab>
                        ))}
                    </Tabs>
                    <Content>
                        <SubTabs>
                            <SubTab>User accounts overview</SubTab>
                            <SubTab $pill>User groups</SubTab>
                        </SubTabs>
                        <Notice $mt={10} $h={51} $pad="12px 0 0 17px"><WarnIcon />You do not have the privileges to administrate the users!</Notice>
                        <Heading>User accounts overview</Heading>
                        <Table>
                            <colgroup>
                                <col style={{ width: 42 }} /><col style={{ width: 93 }} /><col style={{ width: 95 }} /><col style={{ width: 88 }} />
                                <col style={{ width: 173 }} /><col style={{ width: 98 }} /><col style={{ width: 55 }} /><col style={{ width: 178 }} />
                            </colgroup>
                            <thead>
                                <tr>
                                    <th></th>
                                    <th>User name</th>
                                    <th>Host name</th>
                                    <th>Password</th>
                                    <th>Global privileges<HelpIcon /></th>
                                    <th>User group</th>
                                    <th>Grant</th>
                                    <th>Action</th>
                                </tr>
                            </thead>
                            <tbody>
                                {users.map((u, i) => (
                                    <tr key={i}>
                                        <td><CheckCell><Check /></CheckCell></td>
                                        <td>{u.any ? <Red $soft>{u.name}</Red> : <Link>{u.name}</Link>}</td>
                                        <td>{u.host}</td>
                                        <td><Red>No{u.help && <HelpIcon />}</Red></td>
                                        <td><Mono>{u.priv}</Mono></td>
                                        <td></td>
                                        <td>{u.grant}</td>
                                        <td>
                                            <ActionCell>
                                                <ActionLink $w={89} $gap={5}><ExportIcon />Export</ActionLink>
                                                <ActionLink $gap={5}><LockIcon open={u.lock === 'Unlock'} />{u.lock}</ActionLink>
                                            </ActionCell>
                                        </td>
                                    </tr>
                                ))}
                            </tbody>
                        </Table>
                        <SelectRow>
                            <TurnArrow />
                            <CheckAll><Check />Check all</CheckAll>
                            <Picked>With selected:</Picked>
                            <ActionLink $gap={6}><ExportIcon />Export</ActionLink>
                        </SelectRow>
                        <Fieldset>
                            <Legend><RemoveUserIcon />Remove selected user accounts</Legend>
                            <Revoke>Revoke all active privileges from the users and delete them afterwards.</Revoke>
                            <DropRow><Check $soft />Drop the databases that have the same names as the users.</DropRow>
                            <FieldFooter><GoButton>Go</GoButton></FieldFooter>
                        </Fieldset>
                        <Notice $mt={21} $h={75} $pad="13px 30px 0 13px" $indent={5}>
                            <WarnIcon />Note: phpMyAdmin gets the users’ privileges directly from MySQL’s privilege tables. The content of these tables may differ from the privileges the server uses, if they have been changed manually. In this case, you should <Link $under>reload the privileges</Link> before you continue.
                        </Notice>
                    </Content>
                    <Console><ConsoleGlyph />Console</Console>
                </Main>
                <VScroll>
                    <ScrollArrow $up $mt={9} />
                    <VThumb />
                    <ScrollArrow $mt={62} />
                </VScroll>
            </Body>

            <HScroll>
                <HTrack>
                    <HArrow $left />
                    <HThumb />
                    <HArrow />
                </HTrack>
            </HScroll>

            <Taskbar>
                <Weather>
                    <WeatherGlyph><WeatherIcon /><Badge>1</Badge></WeatherGlyph>
                    <div>12°C<br />Haze</div>
                </Weather>
                <WinLogo />
                <SearchPill>
                    <Search size={20} color="#222" strokeWidth={2.4} />
                    <span>Search</span>
                    <CricketDoodle />
                </SearchPill>
                <TaskSlot $ml={3}><TaskViewIcon /></TaskSlot>
                <TaskSlot><CopilotIcon /></TaskSlot>
                <TaskSlot $active $dot><ChromeIcon /></TaskSlot>
                <TaskSlot $dot><FilesIcon /></TaskSlot>
                <TaskSlot><EdgeIcon /></TaskSlot>
                <TaskSlot><VsCodeIcon /></TaskSlot>
                <TaskSlot $dot><AndroidStudioIcon /></TaskSlot>
                <TaskSlot $dot><XamppIcon /></TaskSlot>
                <Tray>
                    <ChevronUp size={22} />
                    <LangBlock>ENG<br />IN</LangBlock>
                    <TrayIcons>
                        <Wifi size={24} strokeWidth={2.2} />
                        <Volume2 size={20} />
                        <BatteryGlyph />
                    </TrayIcons>
                    <Clock>21:07<br />03-01-2025</Clock>
                    <Bell size={18} fill="#9be0f5" color="#9be0f5" />
                </Tray>
            </Taskbar>
        </Page>
    )
}

export default App
